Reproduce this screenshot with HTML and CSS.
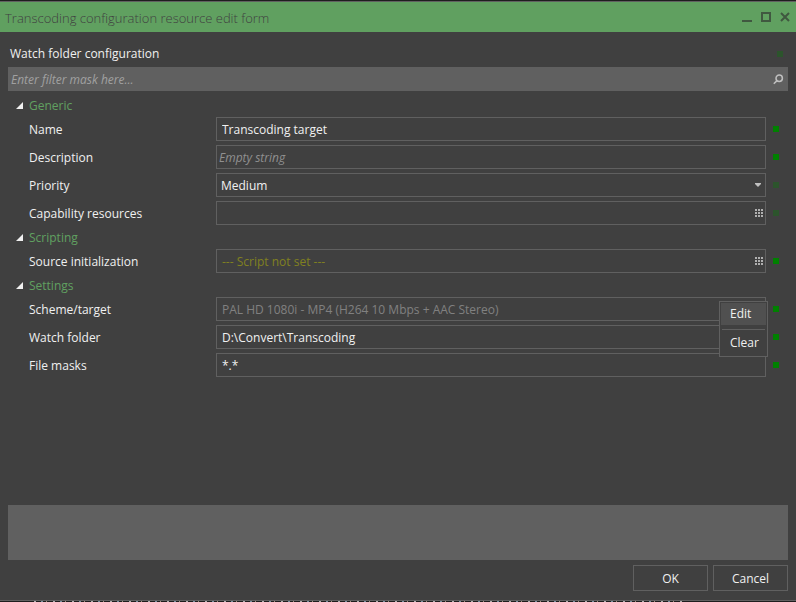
FILE: index.html
```html
<!DOCTYPE html>
<html lang="en">
<head>
    <meta charset="UTF-8">
    <meta name="viewport" content="width=device-width, initial-scale=1.0">
    <title>Transcoding configuration resource edit form</title>
    <link rel="stylesheet" href="styles.css">
</head>
<body>

    <form class="window">
        <header class="titlebar">
            <h1>Transcoding configuration resource edit form</h1>
            <div class="window-buttons">
                <button type="button" aria-label="Minimize">
                    <svg width="10" height="10" viewBox="0 0 10 10"><path d="M0 9h10" stroke-width="2"/></svg>
                </button>
                <button type="button" aria-label="Maximize">
                    <svg width="10" height="10" viewBox="0 0 10 10"><path d="M1 1h8v8h-8z" stroke-width="2"/></svg>
                </button>
                <button type="button" aria-label="Close">
                    <svg width="10" height="10" viewBox="0 0 10 10"><path d="M1 1l8 8M9 1l-8 8" stroke-width="2"/></svg>
                </button>
            </div>
        </header>

        <main class="content">
            <div class="heading">
                <h2>Watch folder configuration</h2>
                <span class="marker dim"></span>
            </div>

            <div class="filter">
                <input type="text" placeholder="Enter filter mask here..." aria-label="Filter mask">
                <svg width="11" height="11" viewBox="0 0 11 11"><circle cx="6.2" cy="4.2" r="3.2"/><path d="M4 6.6L.8 9.8"/></svg>
            </div>

            <section class="group">
                <h3><svg width="7" height="7" viewBox="0 0 7 7"><path d="M7 0v7h-7z"/></svg>Generic</h3>
                <div class="row">
                    <label for="name">Name</label>
                    <div class="field"><input type="text" id="name" value="Transcoding target"></div>
                    <span class="marker"></span>
                </div>
                <div class="row">
                    <label for="description">Description</label>
                    <div class="field"><input type="text" id="description" placeholder="Empty string"></div>
                    <span class="marker"></span>
                </div>
                <div class="row">
                    <label for="priority">Priority</label>
                    <div class="field">
                        <select id="priority">
                            <option>Low</option>
                            <option selected>Medium</option>
                            <option>High</option>
                        </select>
                        <svg class="arrow" width="6" height="4" viewBox="0 0 6 4"><path d="M0 0h6v1l-3 3l-3-3z"/></svg>
                    </div>
                    <span class="marker dim"></span>
                </div>
                <div class="row">
                    <label for="capability">Capability resources</label>
                    <div class="field">
                        <input type="text" id="capability" readonly>
                        <button type="button" class="picker" aria-label="Select resources">
                            <svg width="8" height="8" viewBox="0 0 8 8"><path d="M0 0h2v2h-2zM3 0h2v2h-2zM6 0h2v2h-2zM0 3h2v2h-2zM3 3h2v2h-2zM6 3h2v2h-2zM0 6h2v2h-2zM3 6h2v2h-2zM6 6h2v2h-2z"/></svg>
                        </button>
                    </div>
                    <span class="marker dim"></span>
                </div>
            </section>

            <section class="group">
                <h3><svg width="7" height="7" viewBox="0 0 7 7"><path d="M7 0v7h-7z"/></svg>Scripting</h3>
                <div class="row">
                    <label for="source">Source initialization</label>
                    <div class="field">
                        <input type="text" id="source" class="not-set" value="--- Script not set ---" readonly>
                        <button type="button" class="picker" aria-label="Edit script">
                            <svg width="8" height="8" viewBox="0 0 8 8"><path d="M0 0h2v2h-2zM3 0h2v2h-2zM6 0h2v2h-2zM0 3h2v2h-2zM3 3h2v2h-2zM6 3h2v2h-2zM0 6h2v2h-2zM3 6h2v2h-2zM6 6h2v2h-2z"/></svg>
                        </button>
                    </div>
                    <span class="marker"></span>
                </div>
            </section>

            <section class="group">
                <h3><svg width="7" height="7" viewBox="0 0 7 7"><path d="M7 0v7h-7z"/></svg>Settings</h3>
                <div class="row">
                    <label for="scheme">Scheme/target</label>
                    <div class="field">
                        <input type="text" id="scheme" class="muted" value="PAL HD 1080i - MP4 (H264 10 Mbps + AAC Stereo)" readonly>
                        <!-- Menu opened from the scheme field -->
                        <div class="menu">
                            <button type="button" class="active">Edit</button>
                            <hr>
                            <button type="button">Clear</button>
                        </div>
                    </div>
                    <span class="marker"></span>
                </div>
                <div class="row">
                    <label for="folder">Watch folder</label>
                    <div class="field"><input type="text" id="folder" value="D:\Convert\Transcoding"></div>
                    <span class="marker"></span>
                </div>
                <div class="row">
                    <label for="masks">File masks</label>
                    <div class="field"><input type="text" id="masks" value="*.*"></div>
                    <span class="marker"></span>
                </div>
            </section>
        </main>

        <div class="hint"></div>

        <footer class="actions">
            <button type="submit">OK</button>
            <button type="button">Cancel</button>
        </footer>
    </form>

</body>
</html>
```

FILE: styles.css
```css
* {
    margin: 0;
    padding: 0;
    box-sizing: border-box;
}

body {
    font-family: "Open Sans", "Noto Sans", sans-serif;
    font-size: 12px;
    line-height: 16px;
    background-color: #1e1e1e;
    color: #f0f0f0;
    display: flex;
    flex-direction: column;
    min-height: 100vh;
    padding-top: 1px;
}

/* Sliver of the editor text behind the window */
body::after {
    content: "";
    height: 1px;
    margin: 0 110px 0 34px;
    background: repeating-linear-gradient(90deg, #b0b0b0 0 2px, transparent 2px 7px, #7890a0 7px 9px, transparent 9px 12px, #a09080 12px 13px, transparent 13px 19px);
}

button,
input,
select {
    font: inherit;
    color: inherit;
    background: none;
    border: none;
    outline: none;
}

svg {
    display: block;
}

.window {
    flex: 1;
    display: flex;
    flex-direction: column;
    background-color: #404040;
    border-top: 1px solid #606060;
    border-bottom: 1px solid #606060;
}

/* Title bar */
.titlebar {
    display: flex;
    align-items: center;
    justify-content: space-between;
    height: 30px;
    padding: 0 6px 0 5px;
    background-color: #60a060;
    color: #404040;
}

.titlebar h1 {
    padding-top: 2px;
    font-size: 13px;
    font-weight: 300;
}

.window-buttons {
    display: flex;
    gap: 9px;
}

.window-buttons svg {
    fill: none;
    stroke: #405840;
}

/* Content */
.content {
    flex: 1;
    padding: 0 8px;
}

.heading {
    display: flex;
    align-items: center;
    justify-content: space-between;
    padding: 14px 5px 5px 2px;
}

.heading h2 {
    font-size: 12px;
    font-weight: 400;
}

.marker {
    width: 6px;
    height: 6px;
    background-color: #008000;
}

.marker.dim {
    background-color: #2c542c;
}

.filter {
    display: flex;
    align-items: center;
    height: 24px;
    margin-bottom: 4px;
    padding: 0 4px 0 3px;
    background-color: #606060;
}

.filter input {
    flex: 1;
    min-width: 0;
    padding-top: 2px;
}

.filter svg {
    fill: none;
    stroke: #c0c0c0;
    stroke-width: 1.5;
}

input::placeholder {
    font-style: italic;
    color: #909090;
    opacity: 1;
}

.filter input::placeholder {
    color: #a0a0a0;
}

/* Property groups */
.group h3 {
    display: flex;
    align-items: center;
    gap: 6px;
    height: 20px;
    padding: 2px 0 0 8px;
    font-size: 12px;
    font-weight: 400;
    color: #60a060;
}

.group h3 svg {
    margin-bottom: 2px;
    fill: #f0f0f0;
}

.row {
    display: grid;
    grid-template-columns: 187px 1fr 6px;
    align-items: center;
    height: 28px;
    padding: 0 9px 0 21px;
}

.row label {
    padding-top: 2px;
}

.field {
    position: relative;
    display: flex;
    align-items: center;
    height: 24px;
    margin-right: 7px;
    border: 1px solid #606060;
}

.field input,
.field select {
    flex: 1;
    min-width: 0;
    height: 22px;
    padding: 0 5px;
}

.field input:placeholder-shown {
    padding: 0 2px;
}

.field select {
    appearance: none;
    padding: 2px 4px 0;
}

.field .arrow {
    position: absolute;
    right: 4px;
    fill: #c0c0c0;
    pointer-events: none;
}

.picker {
    padding: 7px 2px;
}

.picker svg {
    fill: #b0b0b0;
}

.not-set {
    color: #808020;
}

.muted {
    color: #808080;
}

/* Popup menu */
.menu {
    position: absolute;
    top: 3px;
    right: -3px;
    z-index: 1;
    width: 49px;
    padding: 1px;
    background-color: #404040;
    border: 1px solid #606060;
}

.menu button {
    display: block;
    width: 100%;
    height: 24px;
    padding-left: 9px;
    text-align: left;
}

.menu button.active {
    height: 22px;
    background-color: #505050;
}

.menu hr {
    margin: 4px 1px 1px;
    border: none;
    border-top: 1px solid #606060;
}

/* Bottom area */
.hint {
    height: 55px;
    margin: 0 8px;
    background-color: #606060;
}

.actions {
    display: flex;
    justify-content: flex-end;
    gap: 5px;
    padding: 5px 8px 9px;
}

.actions button {
    width: 75px;
    height: 26px;
    padding-top: 2px;
    border: 1px solid #606060;
}
```
